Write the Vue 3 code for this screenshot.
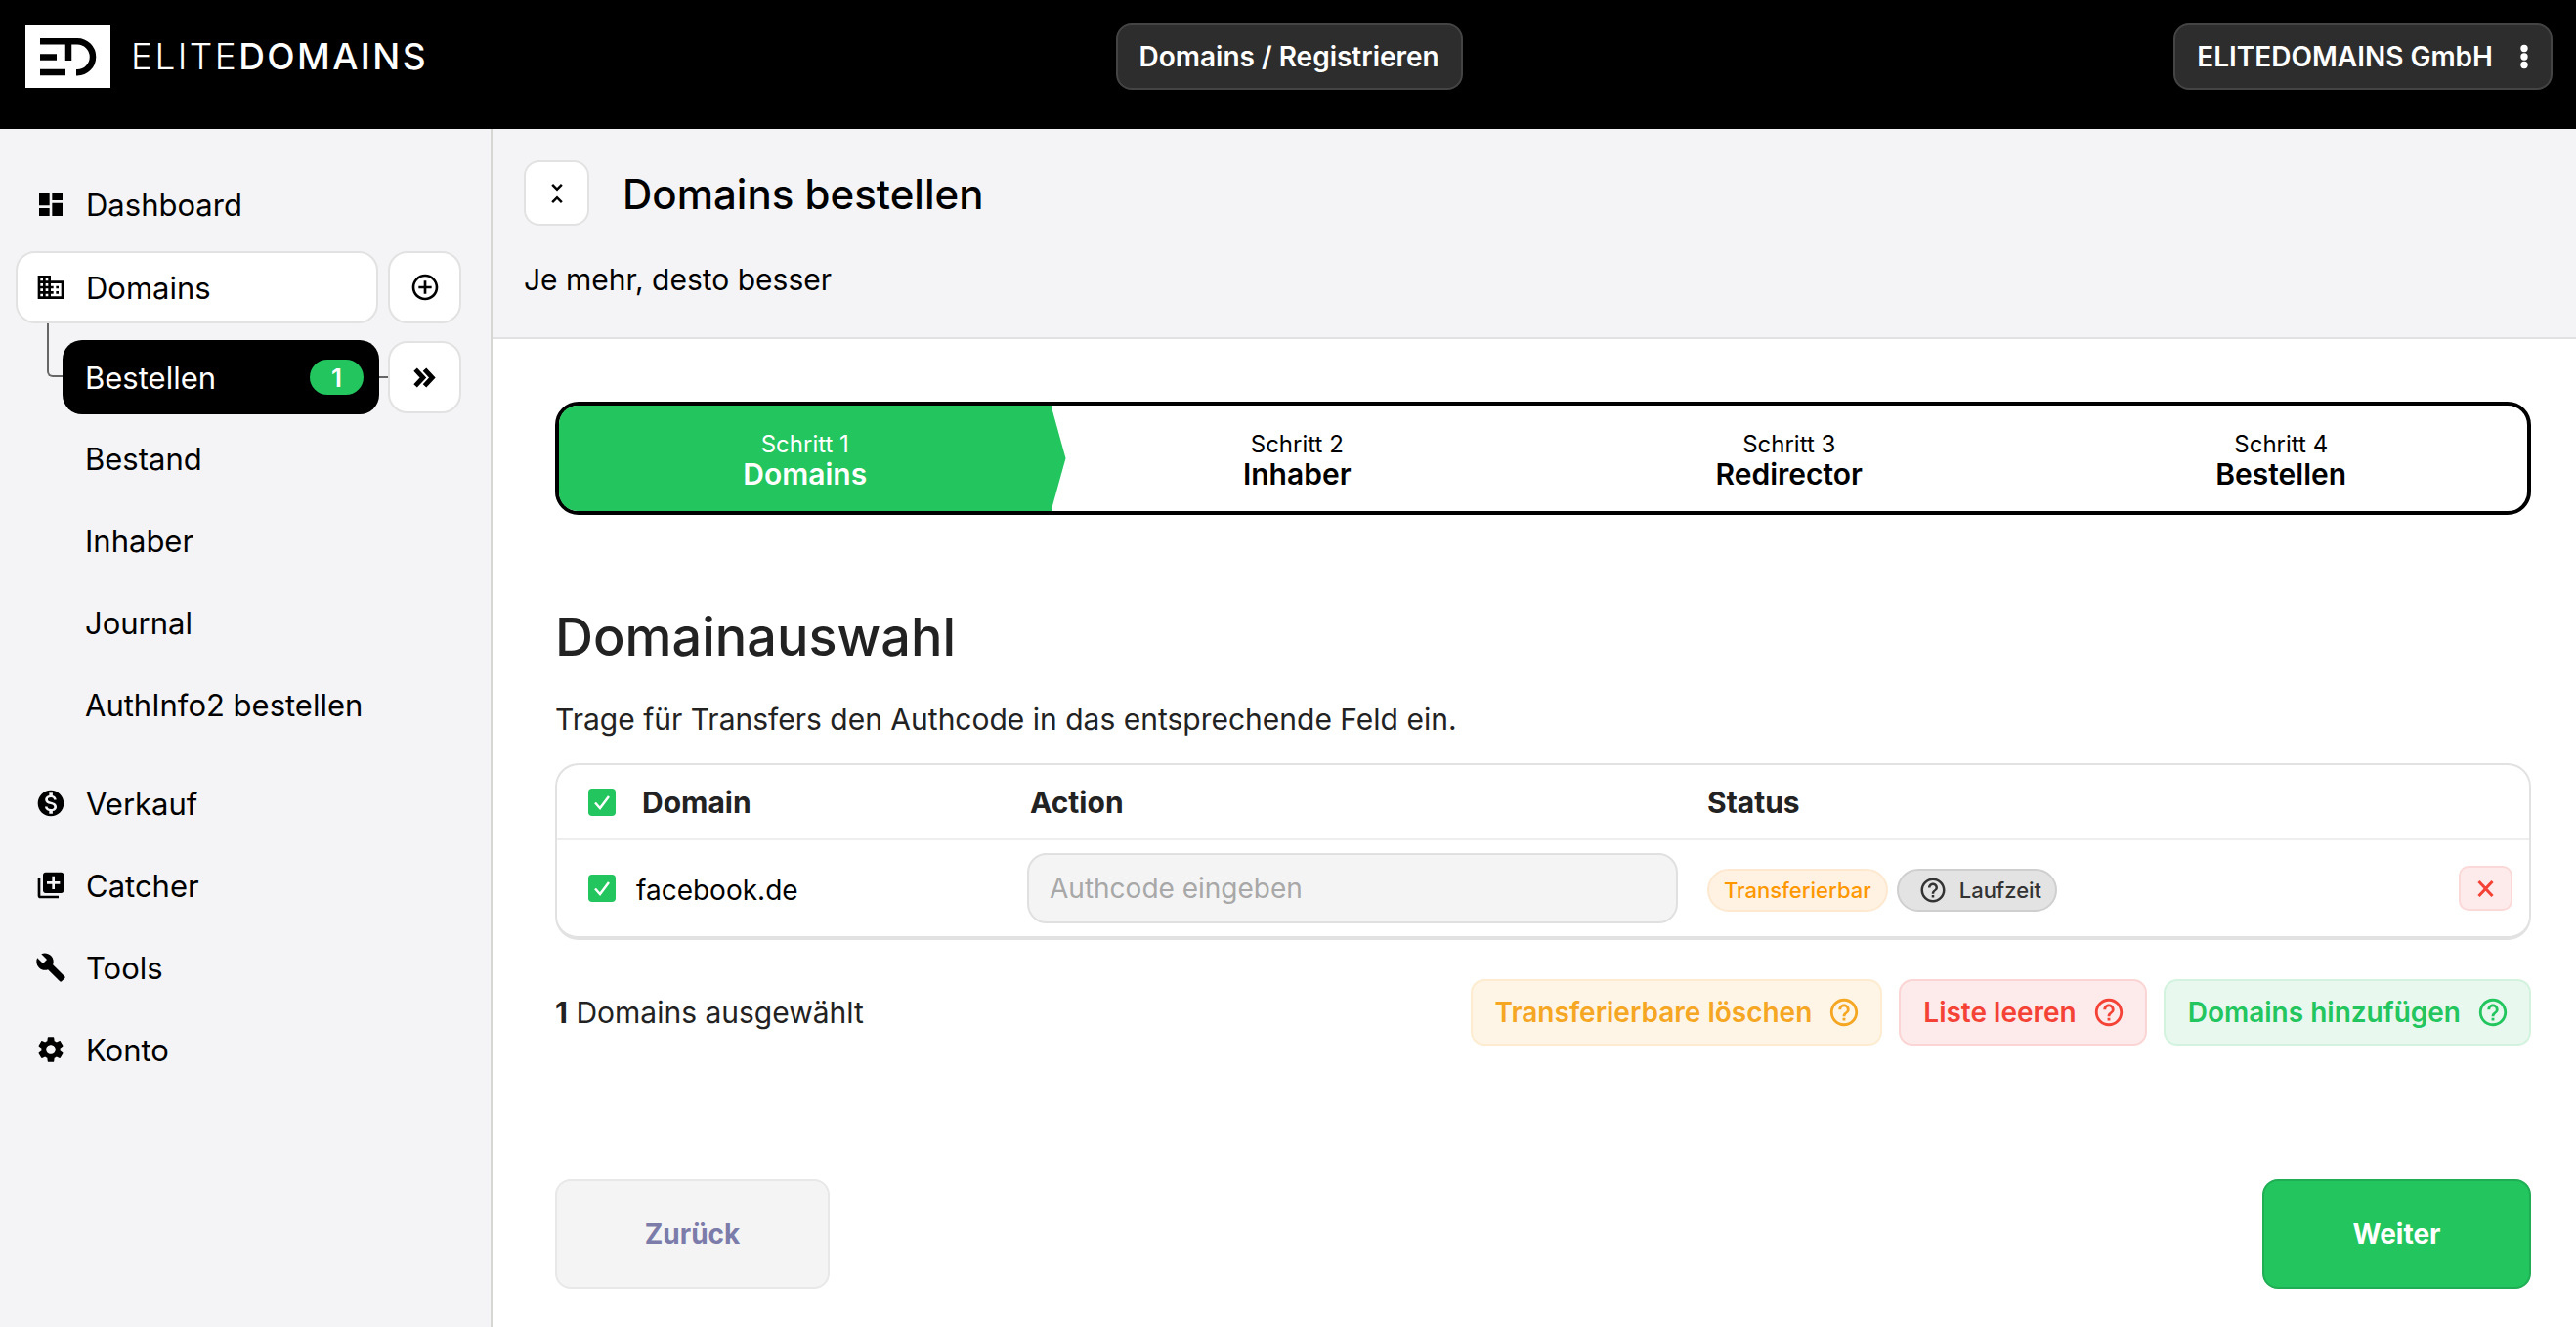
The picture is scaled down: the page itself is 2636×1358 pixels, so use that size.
<template>
  <div class="page">
    <header class="topbar">
      <div class="brand">
        <div class="brand-mark">
          <svg width="87" height="64" viewBox="0 0 87 64" fill="none" stroke="#000" stroke-width="6.5">
            <path d="M15 16.2h38a16 16 0 0 1 0 32h-1" />
            <path d="M15 32.5h17" />
            <path d="M15 48h26" />
            <path d="M44 16v20" />
          </svg>
        </div>
        <span class="brand-name"><span class="light">ELITE</span><span class="strong">DOMAINS</span></span>
      </div>
      <div class="top-pill">Domains / Registrieren</div>
      <div class="top-pill account">
        ELITEDOMAINS GmbH
        <svg width="34" height="34" viewBox="0 0 24 24" fill="#fff"><circle cx="12" cy="6" r="2.6" /><circle cx="12" cy="12" r="2.6" /><circle cx="12" cy="18" r="2.6" /></svg>
      </div>
    </header>

    <div class="layout">
      <aside class="sidebar">
        <a class="nav-item">
          <svg class="nav-icon" viewBox="0 0 24 24"><path d="M3 13h8V3H3v10zm0 8h8v-6H3v6zm10 0h8V11h-8v10zm0-18v6h8V3h-8z" /></svg>
          Dashboard
        </a>
        <div class="nav-row domains-row">
          <a class="nav-item boxed">
            <svg class="nav-icon" viewBox="0 0 24 24"><path d="M12 7V3H2v18h20V7H12zM6 19H4v-2h2v2zm0-4H4v-2h2v2zm0-4H4V9h2v2zm0-4H4V5h2v2zm4 12H8v-2h2v2zm0-4H8v-2h2v2zm0-4H8V9h2v2zm0-4H8V5h2v2zm10 12h-8v-2h2v-2h-2v-2h2v-2h-2V9h8v10zm-2-8h-2v2h2v-2zm0 4h-2v2h2v-2z" /></svg>
            Domains
          </a>
          <button class="square-btn">
            <svg width="32" height="32" viewBox="0 0 24 24"><path d="M13 7h-2v4H7v2h4v4h2v-4h4v-2h-4V7zm-1-5C6.48 2 2 6.48 2 12s4.48 10 10 10 10-4.48 10-10S17.52 2 12 2zm0 18c-4.41 0-8-3.59-8-8s3.59-8 8-8 8 3.59 8 8-3.59 8-8 8z" /></svg>
          </button>
        </div>
        <div class="nav-row active-row">
          <span class="tree-line"></span>
          <a class="nav-item active">
            Bestellen
            <span class="count">1</span>
          </a>
          <span class="link-line"></span>
          <button class="square-btn">
            <svg width="23" height="21" viewBox="0 0 22 20" fill="none" stroke="#000" stroke-width="4.6"><path d="M2 2l7.5 8L2 18" /><path d="M11 2l7.5 8L11 18" /></svg>
          </button>
        </div>
        <a v-for="item in subItems" :key="item" class="nav-item sub">{{ item }}</a>
        <a class="nav-item section-start">
          <svg class="nav-icon" viewBox="0 0 24 24"><path d="M12 2C6.48 2 2 6.48 2 12s4.48 10 10 10 10-4.48 10-10S17.52 2 12 2zm1.41 16.09V20h-2.67v-1.93c-1.71-.36-3.16-1.46-3.27-3.4h1.96c.1 1.05.82 1.87 2.65 1.87 1.96 0 2.4-.98 2.4-1.59 0-.83-.44-1.61-2.67-2.14-2.48-.6-4.18-1.62-4.18-3.67 0-1.72 1.39-2.84 3.11-3.21V4h2.67v1.95c1.86.45 2.79 1.86 2.85 3.39H14.3c-.05-1.11-.64-1.87-2.22-1.87-1.5 0-2.4.68-2.4 1.64 0 .84.65 1.39 2.67 1.91s4.18 1.39 4.18 3.91c-.01 1.83-1.38 2.83-3.12 3.16z" /></svg>
          Verkauf
        </a>
        <a class="nav-item">
          <svg class="nav-icon" viewBox="0 0 24 24"><path d="M4 6H2v14c0 1.1.9 2 2 2h14v-2H4V6zm16-4H8c-1.1 0-2 .9-2 2v12c0 1.1.9 2 2 2h12c1.1 0 2-.9 2-2V4c0-1.1-.9-2-2-2zm-1 9h-4v4h-2v-4H9V9h4V5h2v4h4v2z" /></svg>
          Catcher
        </a>
        <a class="nav-item">
          <svg class="nav-icon" viewBox="0 0 24 24"><path d="M22.7 19l-9.1-9.1c.9-2.3.4-5-1.5-6.9-2-2-5-2.4-7.4-1.3L9 6 6 9 1.6 4.7C.4 7.1.9 10.1 2.9 12.1c1.9 1.9 4.6 2.4 6.9 1.5l9.1 9.1c.4.4 1 .4 1.4 0l2.3-2.3c.5-.4.5-1.1.1-1.4z" /></svg>
          Tools
        </a>
        <a class="nav-item">
          <svg class="nav-icon" viewBox="0 0 24 24"><path d="M19.14 12.94c.04-.3.06-.61.06-.94 0-.32-.02-.64-.07-.94l2.03-1.58c.18-.14.23-.41.12-.61l-1.92-3.32c-.12-.22-.37-.29-.59-.22l-2.39.96c-.5-.38-1.03-.7-1.62-.94l-.36-2.54c-.04-.24-.24-.41-.48-.41h-3.84c-.24 0-.43.17-.47.41l-.36 2.54c-.59.24-1.13.57-1.62.94l-2.39-.96c-.22-.08-.47 0-.59.22L2.74 8.87c-.12.21-.08.47.12.61l2.03 1.58c-.05.3-.09.63-.09.94s.02.64.07.94l-2.03 1.58c-.18.14-.23.41-.12.61l1.92 3.32c.12.22.37.29.59.22l2.39-.96c.5.38 1.03.7 1.62.94l.36 2.54c.05.24.24.41.48.41h3.84c.24 0 .44-.17.47-.41l.36-2.54c.59-.24 1.13-.56 1.62-.94l2.39.96c.22.08.47 0 .59-.22l1.92-3.32c.12-.22.07-.47-.12-.61l-2.01-1.58zM12 15.6c-1.98 0-3.6-1.62-3.6-3.6s1.62-3.6 3.6-3.6 3.6 1.62 3.6 3.6-1.62 3.6-3.6 3.6z" /></svg>
          Konto
        </a>
      </aside>

      <main class="main">
        <section class="page-head">
          <div class="title-row">
            <button class="collapse-btn">
              <svg width="30" height="30" viewBox="0 0 24 24"><path d="M7.41 18.59 8.83 20 12 16.83 15.17 20l1.41-1.41L12 14l-4.59 4.59zm9.18-13.18L15.17 4 12 7.17 8.83 4 7.41 5.41 12 10l4.59-4.59z" /></svg>
            </button>
            <h1>Domains bestellen</h1>
          </div>
          <p class="lead">Je mehr, desto besser</p>
        </section>

        <section class="content">
          <div class="stepper">
            <div v-for="(step, i) in steps" :key="step" class="step" :class="{ current: i === 0 }">
              <span class="step-no">Schritt {{ i + 1 }}</span>
              <span class="step-name">{{ step }}</span>
            </div>
          </div>

          <h2>Domainauswahl</h2>
          <p class="hint">Trage für Transfers den Authcode in das entsprechende Feld ein.</p>

          <div class="table">
            <div class="table-row table-head">
              <div class="cell-domain">
                <span class="check"><svg width="20" height="20" viewBox="0 0 20 20" fill="none" stroke="#fff" stroke-width="2.4"><path d="M3 10.5 8 16l9-12" /></svg></span>
                Domain
              </div>
              <div class="head-action">Action</div>
              <div>Status</div>
            </div>
            <div class="table-row table-body">
              <div class="cell-domain">
                <span class="check"><svg width="20" height="20" viewBox="0 0 20 20" fill="none" stroke="#fff" stroke-width="2.4"><path d="M3 10.5 8 16l9-12" /></svg></span>
                <span class="domain-name">facebook.de</span>
              </div>
              <input class="authcode" placeholder="Authcode eingeben" />
              <div class="status-cell">
                <span class="badge badge-orange">Transferierbar</span>
                <span class="badge badge-grey">
                  <svg width="30" height="30" viewBox="0 0 24 24" fill="#333"><path :d="helpIcon" /></svg>
                  Laufzeit
                </span>
                <button class="remove-btn">
                  <svg width="17" height="17" viewBox="0 0 17 17" fill="none" stroke="#f44336" stroke-width="3"><path d="M1.5 1 15.5 16M15.5 1 1.5 16" /></svg>
                </button>
              </div>
            </div>
          </div>

          <div class="selection-bar">
            <div class="selected"><b>1</b> Domains ausgewählt</div>
            <div class="actions">
              <button class="soft-btn soft-orange">Transferierbare löschen <svg width="34" height="34" viewBox="0 0 24 24" fill="#f5a623"><path :d="helpIcon" /></svg></button>
              <button class="soft-btn soft-red">Liste leeren <svg width="34" height="34" viewBox="0 0 24 24" fill="#f44336"><path :d="helpIcon" /></svg></button>
              <button class="soft-btn soft-green">Domains hinzufügen <svg width="34" height="34" viewBox="0 0 24 24" fill="#22c55e"><path :d="helpIcon" /></svg></button>
            </div>
          </div>

          <div class="wizard-nav">
            <button class="nav-btn back">Zurück</button>
            <button class="nav-btn next">Weiter</button>
          </div>
        </section>
      </main>
    </div>
  </div>
</template>

<script setup>
const subItems = ['Bestand', 'Inhaber', 'Journal', 'AuthInfo2 bestellen']
const steps = ['Domains', 'Inhaber', 'Redirector', 'Bestellen']
const helpIcon = 'M11 18h2v-2h-2v2zm1-16C6.48 2 2 6.48 2 12s4.48 10 10 10 10-4.48 10-10S17.52 2 12 2zm0 18c-4.41 0-8-3.59-8-8s3.59-8 8-8 8 3.59 8 8-3.59 8-8 8zm0-14c-2.21 0-4 1.79-4 4h2c0-1.1.9-2 2-2s2 .9 2 2c0 2-3 1.75-3 5h2c0-2.25 3-2.5 3-5 0-2.21-1.79-4-4-4z'
</script>

<style>
body {
  margin: 0;
  background: #fff;
}
</style>

<style scoped>
.page {
  min-height: 100vh;
  display: flex;
  flex-direction: column;
  font-family: Inter, "Liberation Sans", sans-serif;
  color: #000;
}

.topbar {
  height: 132px;
  background: #000;
  position: relative;
  display: flex;
  align-items: flex-start;
  justify-content: space-between;
  padding: 24px 24px 0 26px;
  box-sizing: border-box;
}

.brand {
  display: flex;
  gap: 21px;
  width: 388px;
  margin-top: 2px;
}

.brand-mark {
  width: 87px;
  height: 64px;
  flex-shrink: 0;
  background: #fff;
}

.brand-mark svg {
  display: block;
}

.brand-name {
  color: #fff;
  font-size: 37px;
  line-height: 64px;
  letter-spacing: 2.4px;
  white-space: nowrap;
}

.brand-name .light {
  font-weight: 300;
}

.brand-name .strong {
  font-weight: 500;
}

.top-pill {
  height: 68px;
  box-sizing: border-box;
  padding: 0 22px;
  display: flex;
  align-items: center;
  background: #2d2d2d;
  border: 2px solid #444;
  border-radius: 16px;
  color: #fff;
  font-size: 28px;
  font-weight: 600;
  white-space: nowrap;
}

.account {
  gap: 15px;
  padding-right: 10px;
}

.layout {
  flex: 1;
  display: flex;
}

.sidebar {
  width: 504px;
  flex-shrink: 0;
  box-sizing: border-box;
  background: #f4f4f6;
  border-right: 2px solid #d6d6d2;
  padding: 40px 30px 0 16px;
  display: flex;
  flex-direction: column;
  gap: 10px;
}

.nav-item {
  height: 74px;
  box-sizing: border-box;
  display: flex;
  align-items: center;
  gap: 20px;
  padding-left: 20px;
  font-size: 31px;
  white-space: nowrap;
}

.nav-icon {
  width: 32px;
  height: 32px;
  flex-shrink: 0;
}

.nav-item.sub {
  padding-left: 71px;
}

.nav-row {
  display: flex;
  align-items: center;
  position: relative;
}

.domains-row {
  gap: 10px;
  margin-top: 1px;
}

.boxed {
  width: 371px;
  background: #fff;
  border: 2px solid #e2e2e2;
  border-radius: 20px;
  padding-left: 18px;
}

.square-btn {
  width: 75px;
  height: 74px;
  padding: 0;
  display: flex;
  align-items: center;
  justify-content: center;
  background: #fff;
  border: 2px solid #e2e2e2;
  border-radius: 20px;
}

.active-row {
  margin-top: 7px;
  margin-bottom: -2px;
  height: 76px;
}

.active {
  width: 324px;
  height: 76px;
  margin-left: 48px;
  background: #000;
  color: #fff;
  border-radius: 20px;
  padding: 0 16px 0 23px;
  justify-content: space-between;
}

.count {
  width: 55px;
  height: 36px;
  border-radius: 18px;
  background: #22c55e;
  color: #fff;
  font-size: 26px;
  font-weight: 600;
  display: flex;
  align-items: center;
  justify-content: center;
}

.tree-line {
  position: absolute;
  left: 32px;
  top: -17px;
  width: 16px;
  height: 55px;
  box-sizing: border-box;
  border-left: 2px solid #666;
  border-bottom: 2px solid #666;
  border-bottom-left-radius: 6px;
}

.link-line {
  width: 9px;
  height: 2px;
  background: #666;
}

.section-start {
  margin-top: 17px;
}

.main {
  flex: 1;
  min-width: 0;
}

.page-head {
  background: #f4f4f6;
  border-bottom: 2px solid #e2e2e2;
  padding: 32px 32px 40px;
}

.title-row {
  display: flex;
  align-items: center;
  gap: 34px;
}

.collapse-btn {
  width: 67px;
  height: 67px;
  padding: 0;
  display: flex;
  align-items: center;
  justify-content: center;
  background: #fff;
  border: 2px solid #e2e2e2;
  border-radius: 16px;
}

h1 {
  margin: 0;
  padding-top: 2px;
  font-size: 42px;
  font-weight: 500;
}

.lead {
  margin: 36px 0 0;
  font-size: 30px;
  line-height: 38px;
}

.content {
  padding: 64px 46px 0 64px;
}

.stepper {
  height: 116px;
  box-sizing: border-box;
  border: 4px solid #000;
  border-radius: 24px;
  display: grid;
  grid-template-columns: repeat(4, 1fr);
}

.step {
  position: relative;
  display: flex;
  flex-direction: column;
  align-items: center;
  justify-content: center;
  padding-top: 3px;
}

.step.current {
  background: #22c55e;
  color: #fff;
  border-radius: 19px 0 0 19px;
}

.step.current::after {
  content: "";
  position: absolute;
  top: 0;
  bottom: 0;
  left: 100%;
  width: 15px;
  background: #22c55e;
  clip-path: polygon(0 0, 100% 50%, 0 100%);
}

.step-no {
  font-size: 24px;
  line-height: 28px;
}

.step-name {
  font-size: 30px;
  font-weight: 600;
  line-height: 32px;
}

h2 {
  margin: 91px 0 0;
  color: #222;
  font-size: 54px;
  font-weight: 500;
  line-height: 68px;
}

.hint {
  margin: 31px 0 0;
  color: #222;
  font-size: 30px;
  line-height: 38px;
}

.table {
  margin-top: 26px;
  border: 2px solid #e2e2e2;
  border-bottom-width: 4px;
  border-radius: 24px;
}

.table-row {
  display: grid;
  grid-template-columns: 449px 696px 1fr;
  align-items: center;
  padding: 0 17px 0 32px;
}

.table-head {
  height: 75px;
  border-bottom: 2px solid #eee;
  font-size: 30px;
  font-weight: 700;
  color: #222;
}

.cell-domain {
  display: flex;
  align-items: center;
  gap: 27px;
}

.head-action {
  padding-left: 3px;
}

.table-body {
  height: 98px;
}

.table-body .cell-domain {
  gap: 21px;
}

.domain-name {
  padding-top: 3px;
  font-size: 28px;
}

.check {
  width: 28px;
  height: 28px;
  flex-shrink: 0;
  border-radius: 4px;
  background: #22c55e;
  display: flex;
  align-items: center;
  justify-content: center;
}

.authcode {
  width: 666px;
  height: 72px;
  box-sizing: border-box;
  padding: 0 21px;
  background: #f4f4f4;
  border: 2px solid #e0e0e0;
  border-radius: 20px;
  font-family: inherit;
  font-size: 28px;
  outline: none;
}

.authcode::placeholder {
  color: #a8a8a8;
}

.status-cell {
  display: flex;
  align-items: center;
  gap: 9px;
}

.badge {
  height: 44px;
  margin-top: 4px;
  box-sizing: border-box;
  display: flex;
  align-items: center;
  border-radius: 22px;
  font-size: 22px;
  font-weight: 500;
  white-space: nowrap;
}

.badge-orange {
  padding: 0 15px;
  background: #fff2e3;
  border: 2px solid #ffe8d0;
  color: #ff9800;
}

.badge-grey {
  padding: 0 14px 0 20px;
  gap: 12px;
  background: #e3e3e3;
  border: 2px solid #cfcfcf;
  color: #333;
}

.remove-btn {
  width: 55px;
  height: 46px;
  margin-left: auto;
  padding: 0;
  display: flex;
  align-items: center;
  justify-content: center;
  background: #fdeaea;
  border: 2px solid #fcd9d9;
  border-radius: 10px;
}

.selection-bar {
  margin-top: 40px;
  display: flex;
  align-items: center;
  justify-content: space-between;
}

.selected {
  font-size: 30px;
  color: #222;
}

.selected b {
  font-weight: 700;
}

.actions {
  display: flex;
  gap: 17px;
}

.soft-btn {
  height: 68px;
  box-sizing: border-box;
  padding: 0 20px 0 23px;
  display: flex;
  align-items: center;
  gap: 16px;
  border: 2px solid;
  border-radius: 14px;
  font-family: inherit;
  font-size: 28px;
  font-weight: 600;
  white-space: nowrap;
}

.soft-orange {
  background: #fef5e6;
  border-color: #fdecd0;
  color: #f5a623;
}

.soft-red {
  background: #fdeaea;
  border-color: #fbd5d5;
  color: #f44336;
}

.soft-green {
  background: #e8f8ee;
  border-color: #d3f3df;
  color: #22c55e;
}

.wizard-nav {
  margin-top: 137px;
  display: flex;
  justify-content: space-between;
}

.nav-btn {
  height: 112px;
  box-sizing: border-box;
  border: 2px solid;
  border-radius: 16px;
  font-family: inherit;
  font-size: 28px;
  font-weight: 700;
}

.back {
  width: 281px;
  background: #f4f4f4;
  border-color: #e8e8e8;
  color: #7c7caa;
}

.next {
  width: 275px;
  background: #22c55e;
  border-color: #1fae54;
  color: #fff;
}
</style>
